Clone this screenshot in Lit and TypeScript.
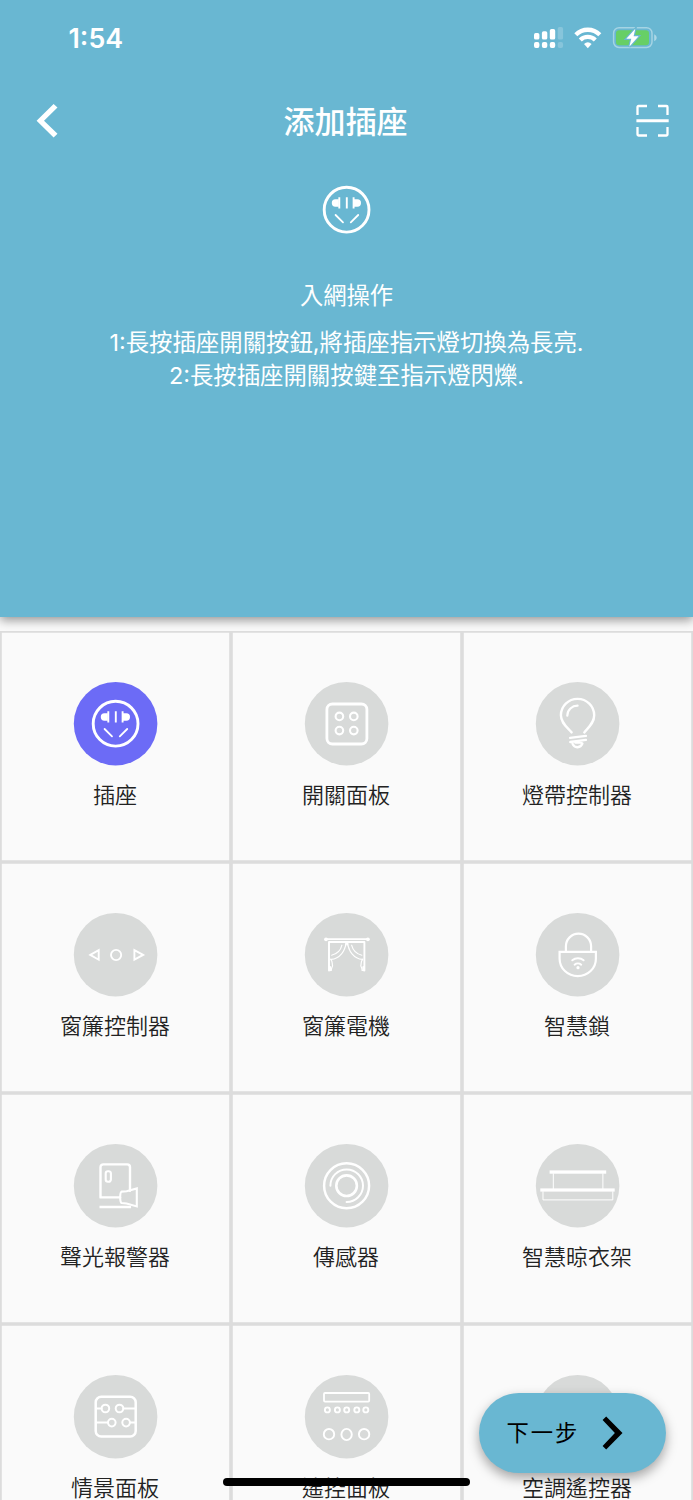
import { LitElement, html, svg, css } from "lit";
import { customElement, property } from "lit/decorators.js";

const icons: Record<string, unknown> = {
  socket: svg`
    <circle r="22.4" stroke-width="2.9"/>
    <path stroke="none" fill="#fff" d="M-7.8-10.4h-3.4a3.6 3.7 0 0 0 0 7.4h3.4zM7.4-10.4h3.4a3.6 3.7 0 0 1 0 7.4H7.4z"/>
    <path stroke-width="1.9" stroke-linecap="butt" d="M-7.3-12.4v11.3M7-12.4v11.3M.2-12.4v11.3"/>
    <path stroke-width="1.8" d="M-11 5.3l7.4 7.4M11.6 5.3L4.2 12.7"/>`,
  panel: svg`
    <rect x="-19.7" y="-19.7" width="40" height="40" rx="5.5" stroke-width="2.8"/>
    <g stroke-width="2.1"><circle cx="-7.2" cy="-7.3" r="3.8"/><circle cx="7.2" cy="-7.3" r="3.8"/>
    <circle cx="-7.2" cy="6.9" r="3.8"/><circle cx="7.2" cy="6.9" r="3.8"/></g>`,
  bulb: svg`
    <path stroke-width="2.4" d="M-6 8.7C-10.5 3.5-16.7-.8-16.7-8.4A16.6 16.4 0 0 1 16.6-8.4C16.6-.8 11 3.5 6.7 8.7"/>
    <path stroke-width="2.2" d="M-10.3-8C-10.3-14-5.5-18 0-18"/>
    <path stroke-width="2.4" d="M-7.5 14.2L8.3 12.2M-7.3 18.3L8.3 16.2M-5 20.2c2 4.8 8 4.2 9.8-.3M-2.2 18.8H3.5"/>`,
  curtainControl: svg`
    <g stroke-width="1.9" stroke-linejoin="miter"><path d="M-25.3.2l8.4-4.8v9.6zM27.5.2l-8.7-4.8v9.6z"/><circle cx=".5" cy=".3" r="5.1"/></g>`,
  curtain: svg`
    <g stroke-width="1.7"><path d="M-20-15.6H20.5"/><path stroke-width="1.9" d="M-17.6 15.8V-12.7H17.8V15.8"/></g>
    <g fill="#fff" stroke="none"><circle cx="-20.6" cy="-15.4" r="1.9"/><circle cx="21.3" cy="-15.4" r="1.9"/></g>
    <g stroke-width="1.15"><path d="M-.8-12C-1-4-7 4-15.5 4.7M-4.7-9.5C-6-4-10-.5-15 .5M1.2-12C1.4-4 7.4 4 15.8 4.7M5-9.5C6.4-4 10.4-.5 15.3.5M.2-12L-2.5-5M.2-12L3-5"/>
    <path d="M-16 4.5c2.6 3 1.2 4.5 2 6.5-.3 1.8-1.3 2-1.3 4.8h-2.2M16.2 4.5c-2.6 3-1.2 4.5-2 6.5.3 1.8 1.3 2 1.3 4.8h2.2"/>
    <path stroke-width="2.2" d="M-16.6 12.5v3M16.8 12.5v3"/></g>`,
  lock: svg`
    <path stroke-width="2.2" stroke-linejoin="miter" d="M-18-2.8H18.3V4A18.15 17.5 0 0 1-18 4z"/>
    <path stroke-width="2.2" d="M-11.7-3V-8.4A12.6 12.6 0 0 1 13.5-8.4V-3"/>
    <path stroke-width="2" d="M-5.3 5.6a8 7 0 0 1 11.3 0M-3 10a4.7 4 0 0 1 6.6 0"/>
    <circle cx=".4" cy="13" r="1.6" fill="#fff" stroke="none"/>`,
  alarm: svg`
    <path stroke-width="2.4" d="M14.4 5V-18.5a2.8 2.8 0 0 0-2.8-2.8H-12.3a2.8 2.8 0 0 0-2.8 2.8V11.7H4.5"/>
    <rect x="-9.9" y="-14.5" width="5.2" height="10.6" rx="2.2" stroke-width="2.1"/>
    <path stroke-width="2.4" stroke-linecap="butt" d="M-16.1 21.3H15.5"/>
    <path stroke-width="2.1" stroke-linejoin="miter" d="M11 5.5L21.2 2.7V20.7L11 17.8L6 17.3Q4.6 16.5 4.6 11.5Q4.6 6.5 6 5.9z"/>`,
  sensor: svg`
    <circle r="22.5" stroke-width="2.5"/><circle r="10.3" stroke-width="2.6"/>
    <path stroke-width="2" d="M-16.2 0A16.3 16.3 0 1 1 0 16.3"/>`,
  rack: svg`
    <g fill="#fff" stroke="none"><rect x="-28" y="-15.3" width="56.6" height="3.3"/><rect x="-37.3" y="2.7" width="74.4" height="3.2"/></g>
    <path stroke-width="1" stroke-linejoin="miter" d="M-24.3-12V3M25.3-12V3M-34.6 6v8.2H35.2V6"/>`,
  scene: svg`
    <rect x="-19.9" y="-20" width="40" height="39.8" rx="5.5" stroke-width="2.5"/>
    <g stroke-width="2"><circle cx="-10.2" cy="-8.2" r="3.8"/><circle cx="3.9" cy="-8.2" r="3.8"/>
    <circle cx="-3.8" cy="5.9" r="3.8"/><circle cx="10.5" cy="5.9" r="3.8"/>
    <path d="M-19.5-8.2H-14M7.8-8.2H19.5M-19.5 5.9H-7.7M14.5 5.9H19.5"/></g>`,
  remote: svg`
    <rect x="-22.6" y="-23.7" width="45.2" height="8.6" rx="1" stroke-width="1.8"/>
    <g stroke-width="1.9">${[-19.2, -9.2, 0.1, 10.2, 19.2].map((x) => svg`<circle cx=${x} cy="-6.8" r="2.5"/>`)}
    <circle cx="-17.6" cy="17.5" r="5.2"/><ellipse cy="17.8" rx="5.2" ry="5.6"/><circle cx="17.5" cy="17.5" r="5.2"/></g>`,
  blank: svg``,
};

@customElement("device-icon")
class DeviceIcon extends LitElement {
  @property() name = "blank";
  @property() disc = "none";
  static styles = css`
    :host { display: block; width: 84px; height: 84px; flex: none; }
    .glyph { display: block; width: 84px; height: 84px; overflow: visible; }
  `;
  render() {
    return html`<svg class="glyph" viewBox="-41.6 -41.7 84 84" fill="none" stroke="#fff"
      stroke-linecap="round" stroke-linejoin="round"><circle r="41.8" fill=${this.disc} stroke="none"/>${icons[this.name]}</svg>`;
  }
}

const devices = [
  { icon: "socket", label: "插座" },
  { icon: "panel", label: "開關面板" },
  { icon: "bulb", label: "燈帶控制器" },
  { icon: "curtainControl", label: "窗簾控制器" },
  { icon: "curtain", label: "窗簾電機" },
  { icon: "lock", label: "智慧鎖" },
  { icon: "alarm", label: "聲光報警器" },
  { icon: "sensor", label: "傳感器" },
  { icon: "rack", label: "智慧晾衣架" },
  { icon: "scene", label: "情景面板" },
  { icon: "remote", label: "遙控面板" },
  { icon: "blank", label: "空調遙控器" },
];

@customElement("app-root")
class AppRoot extends LitElement {
  static styles = css`
    :host {
      display: block; position: relative; width: 693px; height: 1500px; overflow: hidden;
      background: #fafafa; color: #222;
      font-family: Inter, "Noto Sans CJK TC", sans-serif;
    }
    * { box-sizing: border-box; }
    svg { display: block; }
    .hero {
      height: 617px; background: #69b7d2; color: #fff;
      box-shadow: 0 3px 10px rgba(0, 0, 0, 0.42);
      display: flex; flex-direction: column; align-items: center;
    }
    .status {
      width: 100%; height: 76px; padding: 0 36px 0 68.5px; flex: none;
      display: flex; justify-content: space-between; align-items: center;
    }
    .time { font-size: 26.8px; font-weight: 600; }
    .nav {
      width: 100%; height: 90px; padding: 0 24px 0 36px; flex: none;
      display: grid; grid-template-columns: 34px 1fr 34px; align-items: center;
    }
    .nav .end { justify-self: end; }
    .title { margin: 0; text-align: center; font-size: 31px; line-height: 40px; font-weight: 500; padding: 2px 21px 0 7px; }
    .hero-icon { margin-top: 2px; }
    .subtitle { margin-top: 27px; font-size: 23.3px; line-height: 34px; }
    .steps { margin-top: 13px; font-size: 23.4px; line-height: 33.2px; text-align: center; white-space: nowrap; }
    .grid { margin-top: 14px; display: grid; grid-template-columns: repeat(3, 231px); grid-auto-rows: 231px; }
    .cell {
      display: flex; flex-direction: column; align-items: center; padding-top: 51px;
      box-shadow: inset 0 0 0 1.8px #dcdcdc;
    }
    .label { margin: 13px 1px 0 0; font-size: 22px; line-height: 32px; font-weight: 350; white-space: nowrap; }
    .next {
      position: absolute; left: 478.5px; top: 1392.5px; width: 187.5px; height: 80px;
      border: 0; border-radius: 40px; background: #69b7d2; color: #000; padding: 0 43px 0 28px;
      display: flex; align-items: center; justify-content: space-between;
      box-shadow: 0 5px 12px rgba(0, 0, 0, 0.35);
      font: 400 22.3px/32px Inter, "Noto Sans CJK TC", sans-serif; letter-spacing: 1.9px;
    }
    .home { position: absolute; left: 222.5px; top: 1477.6px; width: 247.5px; height: 8.6px; border-radius: 5px; background: #000; }
  `;

  render() {
    return html`
      <header class="hero">
        <div class="status">
          <span class="time">1:54</span>
          <svg width="124" height="24" viewBox="533 26 124 24" fill="#fff">
            <rect x="534" y="33" width="5.4" height="6.6" rx="1.7"/>
            <rect x="541.9" y="31.3" width="5.4" height="8.3" rx="1.7"/>
            <rect x="549.8" y="29" width="5.4" height="10.6" rx="1.7"/>
            <rect x="557.7" y="27" width="5.4" height="12.6" rx="1.7" opacity=".2"/>
            <rect x="534" y="42" width="5.4" height="5.9" rx="1.9"/>
            <rect x="541.9" y="42" width="5.4" height="5.9" rx="1.9"/>
            <rect x="549.8" y="42" width="5.4" height="5.9" rx="1.9"/>
            <rect x="557.7" y="42" width="5.4" height="5.9" rx="1.9" opacity=".2"/>
            <g fill="none" stroke="#fff" stroke-width="4.3">
              <path d="M575.8 34.7a17 17 0 0 1 24 0"/>
              <path d="M580.3 40a10.7 10.7 0 0 1 15 0"/>
            </g>
            <path d="M587.8 48.2l-3.8-4.2a5.7 5.7 0 0 1 7.6 0z"/>
            <rect x="613.6" y="27.7" width="38.4" height="19.8" rx="5.5" fill="none" stroke="#fff" stroke-opacity=".4" stroke-width="1.5"/>
            <rect x="616" y="30.2" width="33" height="15" rx="3.2" fill="#67cf66"/>
            <path d="M654.2 34.3c3.3 1.5 3.3 5.5 0 7z" fill-opacity=".45"/>
            <path d="M635.3 28.8l-9 10h5l-2 8 9.3-10.5h-5z" stroke="#69b7d2" stroke-width="2.4" paint-order="stroke"/>
          </svg>
        </div>
        <div class="nav">
          <svg width="24" height="36" viewBox="36.4 103 24 36" fill="#fff">
            <path d="M54 104l3.9 3.6-13.5 13.1 13.5 13.1-3.9 3.6L37 120.7z"/>
          </svg>
          <h1 class="title">添加插座</h1>
          <svg class="end" width="34" height="34" viewBox="0 0 34 34" fill="none" stroke="#fff" stroke-width="2.3">
            <path d="M2.5 11V3a1 1 0 0 1 1-1H12M23 2h8.500a1 1 0 0 1 1 1V11M2.500 23v7.500a1 1 0 0 0 1 1H12M23 31.500h8.500a1 1 0 0 0 1-1V23"/>
            <path d="M1.4 16.7h32.3" stroke-width="3"/>
          </svg>
        </div>
        <device-icon class="hero-icon" name="socket"></device-icon>
        <div class="subtitle">入網操作</div>
        <div class="steps">
          <div>1:長按插座開關按鈕,將插座指示燈切換為長亮.</div>
          <div>2:長按插座開關按鍵至指示燈閃爍.</div>
        </div>
      </header>
      <main class="grid">
        ${devices.map(
          (d, i) => html`<div class="cell">
            <device-icon name=${d.icon} disc=${i === 0 ? "#6c6bf6" : "#d8dad9"}></device-icon>
            <div class="label">${d.label}</div>
          </div>`
        )}
      </main>
      <button class="next">
        <span>下一步</span>
        <svg width="21" height="34" viewBox="0 0 21 34"><path d="M4.2.5L20.5 17 4.2 33.5.6 29.9 12.9 17 .6 4.1z"/></svg>
      </button>
      <div class="home"></div>
    `;
  }
}
